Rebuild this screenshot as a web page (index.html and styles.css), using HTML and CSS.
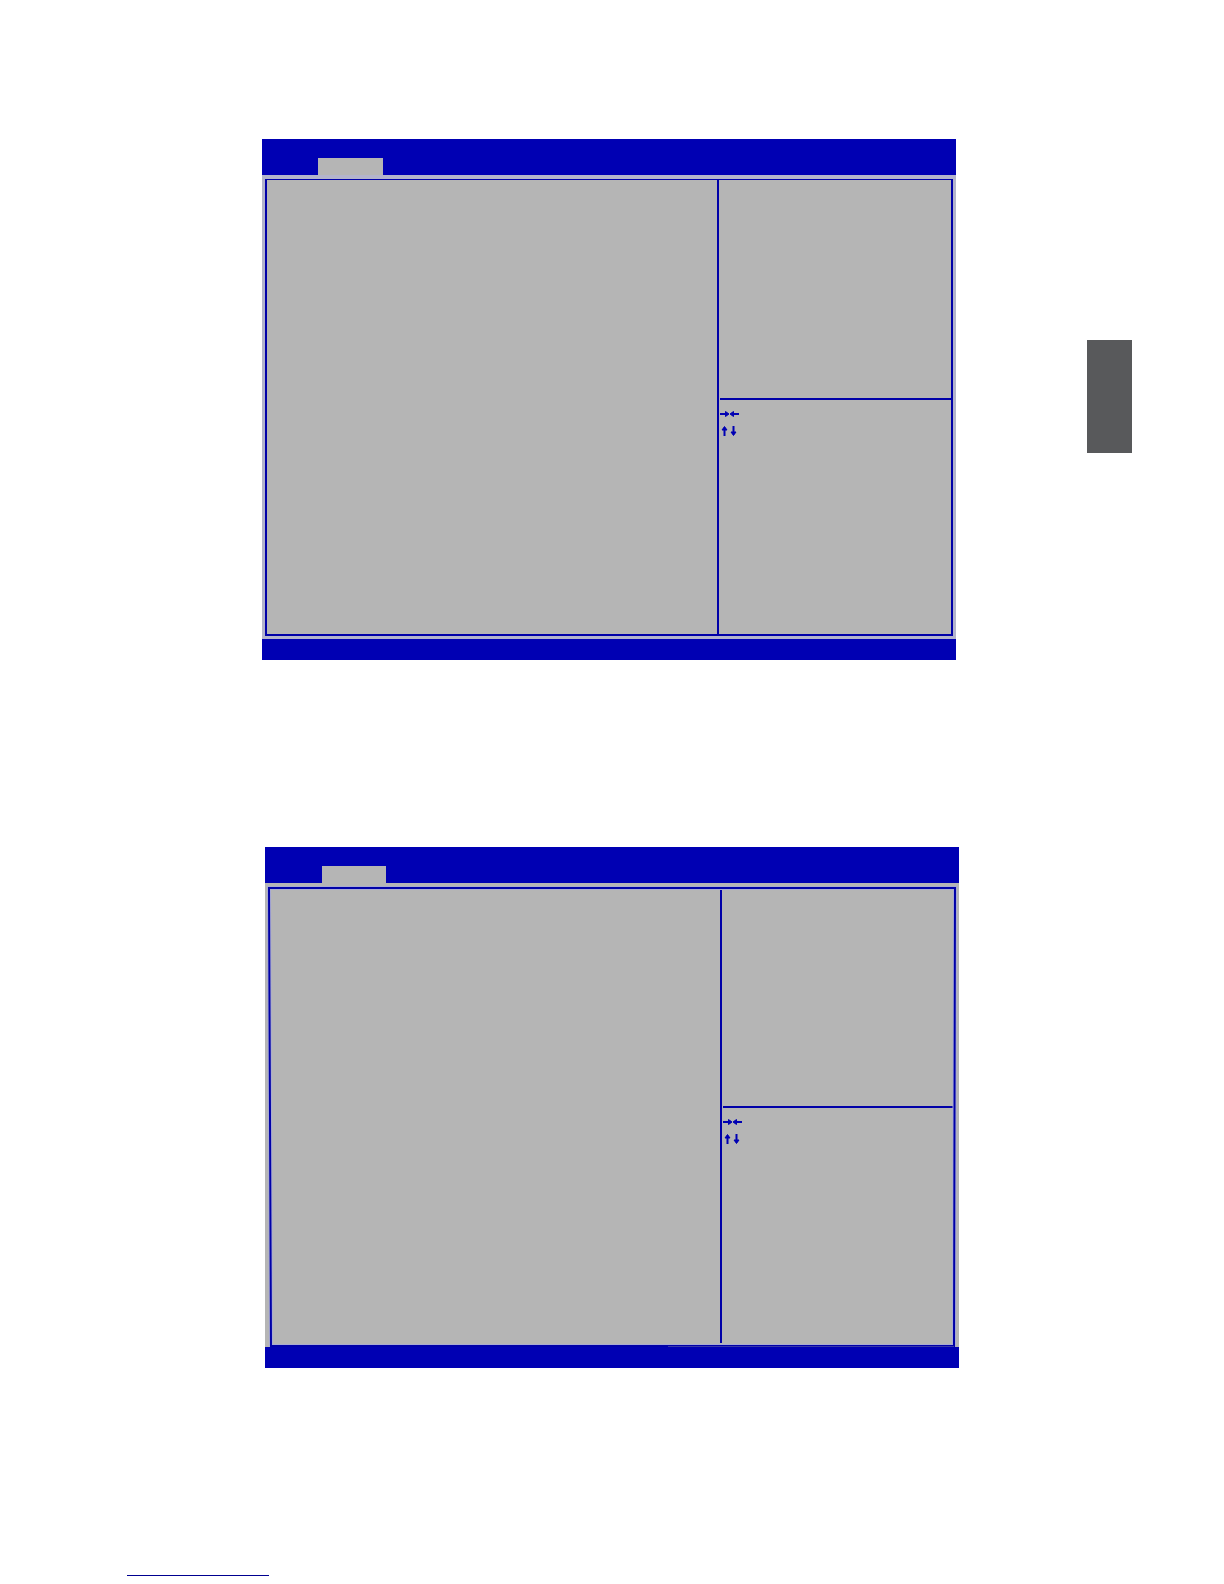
FILE: index.html
```html
<!DOCTYPE html>
<html lang="en">
<head>
<meta charset="utf-8">
<meta name="viewport" content="width=device-width, initial-scale=1">
<title>BIOS setup screens</title>
<link rel="stylesheet" href="styles.css">
</head>
<body>
<div class="page">
  <main class="screens">
    <section class="screen">
      <header class="menu-bar"><div class="menu-tab"></div></header>
      <div class="panel">
        <div class="frame">
          <div class="settings"></div>
          <div class="sidebar">
            <div class="help"></div>
            <div class="keys">
              <svg class="arrows" viewBox="0 0 20 28">
                <path d="M0 5H7M12 5H19M4.500 27V19M13.500 17V25"/>
                <path class="head" d="M5.500 2.500L9 5L5.500 7.500ZM13.500 2.500L10 5L13.500 7.500ZM2 21L4.500 17.500L7 21ZM11 23L13.500 26.500L16 23Z"/>
              </svg>
            </div>
          </div>
        </div>
      </div>
      <footer class="status-bar"></footer>
    </section>
    <section class="screen screen-skewed">
      <header class="menu-bar"><div class="menu-tab"></div></header>
      <div class="panel">
        <svg class="outline" viewBox="0 0 694 464" preserveAspectRatio="none">
          <path class="halo" d="M4 5H690L689 463H6Z"/>
          <path class="line" d="M4 5H690L689 463H6Z"/>
          <path class="seam" d="M403 463.500H689"/>
        </svg>
        <div class="frame">
          <div class="settings"></div>
          <div class="sidebar">
            <div class="help"></div>
            <div class="keys">
              <svg class="arrows" viewBox="0 0 20 28">
                <path d="M0 5H7M12 5H19M4.500 27V19M13.500 17V25"/>
                <path class="head" d="M5.500 2.500L9 5L5.500 7.500ZM13.500 2.500L10 5L13.500 7.500ZM2 21L4.500 17.500L7 21ZM11 23L13.500 26.500L16 23Z"/>
              </svg>
            </div>
          </div>
        </div>
      </div>
      <footer class="status-bar"></footer>
    </section>
  </main>
  <aside class="chapter-tab"></aside>
  <div class="page-rule"></div>
</div>
</body>
</html>
```
FILE: styles.css
```css
* {
  box-sizing: border-box;
}

body {
  margin: 0;
  background: #fff;
  font-family: "Liberation Sans", sans-serif;
}

.page {
  display: grid;
  grid-template-columns: 127fr 135fr 7fr 687fr 131fr 45fr 92fr;
  padding: 139px 0 8px;
}

.screens {
  grid-column: 3 / 5;
  grid-row: 1;
  display: flex;
  flex-direction: column;
  gap: 187px;
}

.screen-skewed {
  margin: 0 -3px 0 3px;
}

.menu-bar {
  display: flex;
  align-items: flex-end;
  height: 36px;
  padding-left: 56px;
  background: #0000b3;
}

.menu-tab {
  width: 65px;
  height: 17px;
  background: #b5b5b5;
}

.screen-skewed .menu-tab {
  width: 64px;
  margin-left: 1px;
}

.panel {
  position: relative;
  display: flex;
  min-height: 464px;
  padding: 4px 3px 3px;
  background: #b3b4cc;
}

.frame {
  flex: 1;
  display: grid;
  grid-template-columns: 452fr 232fr;
  border: 2px solid #0000a8;
  border-top-width: 1px;
  background: #b5b5b5;
}

.settings {
  border-right: 2px solid #0000a8;
}

.sidebar {
  display: flex;
  flex-direction: column;
  padding-left: 1px;
}

.help {
  height: 220px;
  border-bottom: 2px solid #0000a8;
}

.keys {
  padding: 9px 0 0;
}

.screen-skewed .help {
  height: 219px;
  margin-right: -2px;
}

.screen-skewed .panel {
  padding-bottom: 0;
  background: #b5b5b5;
}

.screen-skewed .frame {
  border-color: transparent;
  border-width: 2px 2px 4px;
  background: none;
}

.outline {
  position: absolute;
  inset: 0;
  width: 100%;
  height: 100%;
  fill: none;
}

.halo {
  stroke: #a9abd3;
  stroke-width: 4;
}

.line {
  stroke: #0000a8;
  stroke-width: 2;
}

.seam {
  stroke: #3838a8;
  stroke-width: 1;
}

.arrows {
  display: block;
  width: 20px;
  height: 28px;
  overflow: visible;
  fill: none;
  stroke: #0000b3;
  stroke-width: 2;
}

.head {
  fill: #0000b3;
  stroke-width: 1;
}

.status-bar {
  height: 21px;
  background: #0000b3;
}

.chapter-tab {
  grid-column: 6;
  grid-row: 1;
  height: 113px;
  margin-top: 201px;
  background: #58595b;
}

.page-rule {
  grid-column: 2 / 4;
  grid-row: 2;
  margin-top: 207px;
  border-top: 1px solid #000090;
}
```
